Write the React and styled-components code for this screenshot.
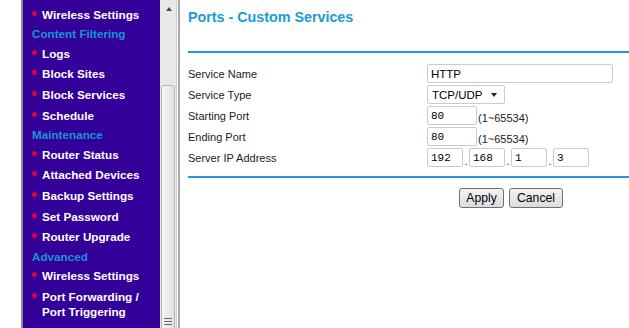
import styled, { createGlobalStyle } from 'styled-components';

const Global = createGlobalStyle`
body {
  margin: 0;
  background: #fff;
  font-family: "Liberation Sans", Arial, sans-serif;
  overflow: hidden;
}
`

const Page = styled.div`
display: flex;
width: 629px;
height: 328px;
overflow: hidden;
background: #fff;
`

const Sidebar = styled.div`
display: flex;
margin-left: 21px;
border-left: 2px solid #8c8c8c;
height: 100%;
flex-shrink: 0;
`

const Menu = styled.div`
width: 137px;
background: #330099;
padding-top: 3.8px;
overflow: hidden;
box-sizing: border-box;
`

const MenuItem = styled.div`
display: flex;
align-items: flex-start;
padding: 2.85px 4px 2.85px 9px;
font-size: 11.7px;
font-weight: bold;
line-height: 15px;
color: #fff;
`

const Bullet = styled.span`
flex: 0 0 10px;
&::before {
  content: '';
  display: block;
  width: 5px;
  height: 5px;
  margin-top: 4px;
  border-radius: 50%;
  background: #e0003c;
}
`

const MenuHeader = styled.div`
padding: 1.65px 4px 1.65px 9px;
font-size: 11.7px;
font-weight: bold;
line-height: 15px;
color: #1596d2;
`

const Scrollbar = styled.div`
display: flex;
flex-direction: column;
width: 16px;
background: #e8e8e8;
border-right: 1px solid #d2d2d2;
`

const ScrollArrow = styled.div`
height: 17px;
display: flex;
justify-content: center;
align-items: center;
`

const ArrowUp = styled.span`
width: 0;
height: 0;
border-left: 3px solid transparent;
border-right: 3px solid transparent;
border-bottom: 4px solid #4a4a4a;
margin-left: 1px;
`

const Track = styled.div`
flex: 1;
padding-top: 68px;
overflow: hidden;
`

const Thumb = styled.div`
height: 320px;
margin: 0 1px;
border: 1px solid #b8b8b8;
border-radius: 2px;
background: linear-gradient(to right, #f6f6f6, #e0e0e0);
display: flex;
flex-direction: column;
align-items: center;
padding-top: 232px;
box-sizing: border-box;
`

const Grip = styled.span`
width: 8px;
height: 1px;
background: #6a6a6a;
margin-bottom: 2px;
`

const Divider = styled.div`
width: 2px;
margin-left: 1px;
background: #a8a8a8;
flex-shrink: 0;
`

const Content = styled.div`
flex: 1;
overflow: hidden;
padding-left: 8px;
`

const Inner = styled.div`
width: 646px;
`

const Title = styled.h1`
margin: 0;
padding-top: 8.5px;
font-size: 14.3px;
line-height: 17px;
font-weight: bold;
color: #1a9ad6;
`

const Rule = styled.div`
height: 2px;
background: #1e9bd7;
margin-top: ${p => p.$top}px;
`

const Form = styled.div`
padding-top: 10.5px;
`

const Row = styled.div`
display: grid;
grid-template-columns: 239px 1fr;
align-items: center;
height: 21px;
`

const Label = styled.div`
font-size: 11px;
color: #222;
`

const Field = styled.div`
display: flex;
align-items: flex-end;
`

const Input = styled.input`
box-sizing: border-box;
width: ${p => p.$w}px;
height: 19px;
margin: 0;
padding: 0 3px;
border: 1px solid #cbcbcb;
border-radius: 2px;
background: #fff;
color: #000;
font-family: ${p => p.$mono ? '"Liberation Mono", "Courier New", monospace' : '"Liberation Sans", Arial, sans-serif'};
font-size: ${p => p.$mono ? 11 : 11.5}px;
outline: none;
`

const SelectBox = styled.div`
box-sizing: border-box;
width: 78px;
height: 19px;
display: flex;
align-items: center;
justify-content: space-between;
padding: 0 7px 0 4px;
border: 1px solid #cbcbcb;
border-radius: 2px;
font-size: 11.5px;
color: #000;
`

const ArrowDown = styled.span`
width: 0;
height: 0;
border-left: 3px solid transparent;
border-right: 3px solid transparent;
border-top: 4px solid #222;
`

const Note = styled.span`
font-size: 11px;
line-height: 13px;
color: #222;
margin-left: 1px;
`

const Dot = styled.span`
width: 6px;
text-align: center;
font-size: 11px;
line-height: 11px;
color: #222;
`

const Buttons = styled.div`
display: flex;
justify-content: center;
gap: 5px;
margin-top: 10px;
`

const Button = styled.button`
box-sizing: border-box;
width: ${p => p.$w}px;
height: 20px;
padding: 0;
border: 1px solid #707070;
border-radius: 3px;
background: linear-gradient(#f3f3f3, #dcdcdc);
font-family: "Liberation Sans", Arial, sans-serif;
font-size: 12.2px;
color: #000;
`

const menu = [
  ['item', 'Wireless Settings'],
  ['header', 'Content Filtering'],
  ['item', 'Logs'],
  ['item', 'Block Sites'],
  ['item', 'Block Services'],
  ['item', 'Schedule'],
  ['header', 'Maintenance'],
  ['item', 'Router Status'],
  ['item', 'Attached Devices'],
  ['item', 'Backup Settings'],
  ['item', 'Set Password'],
  ['item', 'Router Upgrade'],
  ['header', 'Advanced'],
  ['item', 'Wireless Settings'],
  ['item', 'Port Forwarding / Port Triggering'],
  ['item', 'WAN Setup'],
]

const App = () => {
  return (
    <Page>
      <Global />
      <Sidebar>
        <Menu>
          {menu.map(([type, text], i) => type === 'header'
            ? <MenuHeader key={i}>{text}</MenuHeader>
            : <MenuItem key={i}><Bullet /><span>{text}</span></MenuItem>
          )}
        </Menu>
        <Scrollbar>
          <ScrollArrow><ArrowUp /></ScrollArrow>
          <Track>
            <Thumb>
              <Grip /><Grip /><Grip />
            </Thumb>
          </Track>
        </Scrollbar>
      </Sidebar>
      <Divider />
      <Content>
        <Inner>
          <Title>Ports - Custom Services</Title>
          <Rule $top={25} />
          <Form>
            <Row>
              <Label>Service Name</Label>
              <Field><Input $w={186} defaultValue="HTTP" /></Field>
            </Row>
            <Row>
              <Label>Service Type</Label>
              <Field><SelectBox>TCP/UDP<ArrowDown /></SelectBox></Field>
            </Row>
            <Row>
              <Label>Starting Port</Label>
              <Field><Input $w={50} $mono defaultValue="80" /><Note>(1~65534)</Note></Field>
            </Row>
            <Row>
              <Label>Ending Port</Label>
              <Field><Input $w={50} $mono defaultValue="80" /><Note>(1~65534)</Note></Field>
            </Row>
            <Row>
              <Label>Server IP Address</Label>
              <Field>
                <Input $w={36} $mono defaultValue="192" /><Dot>.</Dot>
                <Input $w={36} $mono defaultValue="168" /><Dot>.</Dot>
                <Input $w={36} $mono defaultValue="1" /><Dot>.</Dot>
                <Input $w={36} $mono defaultValue="3" />
              </Field>
            </Row>
          </Form>
          <Rule $top={8} />
          <Buttons>
            <Button $w={45}>Apply</Button>
            <Button $w={54}>Cancel</Button>
          </Buttons>
        </Inner>
      </Content>
    </Page>
  )
}

export default App;
